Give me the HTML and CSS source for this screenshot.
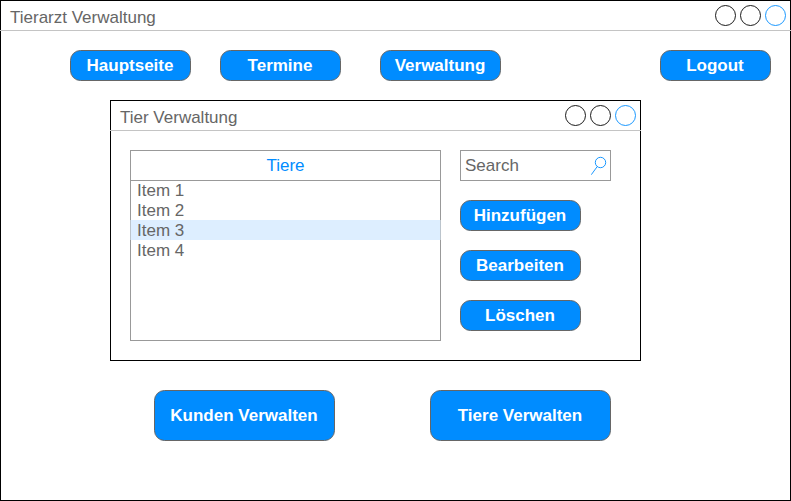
FILE: index.html
```html
<!DOCTYPE html>
<html lang="de">
<head>
<meta charset="utf-8">
<title>Tierarzt Verwaltung</title>
<link rel="stylesheet" href="styles.css">
</head>
<body>
<div class="window app">
  <header class="titlebar">
    <span class="title">Tierarzt Verwaltung</span>
    <svg class="controls" width="71" height="21" viewBox="0 0 71 21"><circle cx="10.5" cy="10.5" r="10"/><circle cx="35.5" cy="10.5" r="10"/><circle class="accent" cx="60.5" cy="10.5" r="10"/></svg>
  </header>
  <nav class="nav">
    <button class="btn">Hauptseite</button>
    <button class="btn">Termine</button>
    <button class="btn current">Verwaltung</button>
    <button class="btn logout">Logout</button>
  </nav>
  <section class="window dialog">
    <header class="titlebar">
      <span class="title">Tier Verwaltung</span>
      <svg class="controls" width="71" height="21" viewBox="0 0 71 21"><circle cx="10.5" cy="10.5" r="10"/><circle cx="35.5" cy="10.5" r="10"/><circle class="accent" cx="60.5" cy="10.5" r="10"/></svg>
    </header>
    <div class="content">
      <div class="list">
        <div class="list-head">Tiere</div>
        <ul class="items">
          <li>Item 1</li>
          <li>Item 2</li>
          <li class="selected">Item 3</li>
          <li>Item 4</li>
        </ul>
      </div>
      <div class="side">
        <div class="search">
          <span>Search</span>
          <svg width="17" height="20" viewBox="0 0 17 20"><circle cx="9.5" cy="6.5" r="5.2"/><path d="M6.2 10.6 L0.3 18.7"/></svg>
        </div>
        <button class="btn">Hinzufügen</button>
        <button class="btn">Bearbeiten</button>
        <button class="btn">Löschen</button>
      </div>
    </div>
  </section>
  <div class="actions">
    <button class="btn large">Kunden Verwalten</button>
    <button class="btn large">Tiere Verwalten</button>
  </div>
</div>
</body>
</html>
```
FILE: styles.css
```css
* { box-sizing: border-box; }
body {
  margin: 0;
  background: #fff;
  color: #666;
  font: 17px/20px "Liberation Sans", Arial, sans-serif;
}
.window { border: 1px solid #000; background: #fff; }
.app { width: 791px; height: 501px; }
.titlebar {
  display: flex;
  justify-content: space-between;
  height: 31px;
  margin: -1px -1px 0;
  padding: 5px 5px 0 10px;
  border-bottom: 1px solid #c4c4c4;
  box-shadow: inset 0 1px #000, inset 1px 0 #000, inset -1px 0 #000;
}
.title { padding-top: 3px; }
.controls { fill: none; stroke: #000; stroke-width: 0.9; }
.controls .accent { stroke: #008cff; }
.nav {
  display: flex;
  gap: 29px;
  padding: 19px 19px 0 69px;
}
.btn {
  width: 121px;
  height: 31px;
  padding: 0 1px 0 0;
  border: 1px solid #666;
  border-radius: 10.5px;
  background: #008cff;
  color: #fff;
  font: bold 17px/20px "Liberation Sans", Arial, sans-serif;
}
.current { margin-left: 10px; }
.logout { width: 111px; margin-left: auto; }
.dialog { width: 531px; height: 261px; margin: 19px 0 0 109px; }
.content {
  display: flex;
  gap: 19px;
  padding: 19px 0 0 19px;
}
.list { width: 311px; height: 191px; border: 1px solid #999; }
.list-head {
  height: 30px;
  border-bottom: 1px solid #999;
  color: #008cff;
  line-height: 29px;
  text-align: center;
}
.items { margin: -1px -1px 0; padding: 0; list-style: none; }
.items li { height: 20px; padding-left: 7px; line-height: 22px; }
.items .selected {
  padding-left: 6px;
  border: solid #bbc4cc;
  border-width: 0 1px;
  background: #ddeeff;
}
.side { display: flex; flex-direction: column; gap: 19px; }
.search {
  display: flex;
  justify-content: space-between;
  width: 151px;
  height: 31px;
  padding: 5px 2px 0 4px;
  border: 1px solid #999;
}
.search svg { fill: none; stroke: #008cff; stroke-width: 0.9; }
.actions {
  display: flex;
  gap: 95px;
  padding: 29px 0 0 153px;
}
.large { width: 181px; height: 51px; }
```
